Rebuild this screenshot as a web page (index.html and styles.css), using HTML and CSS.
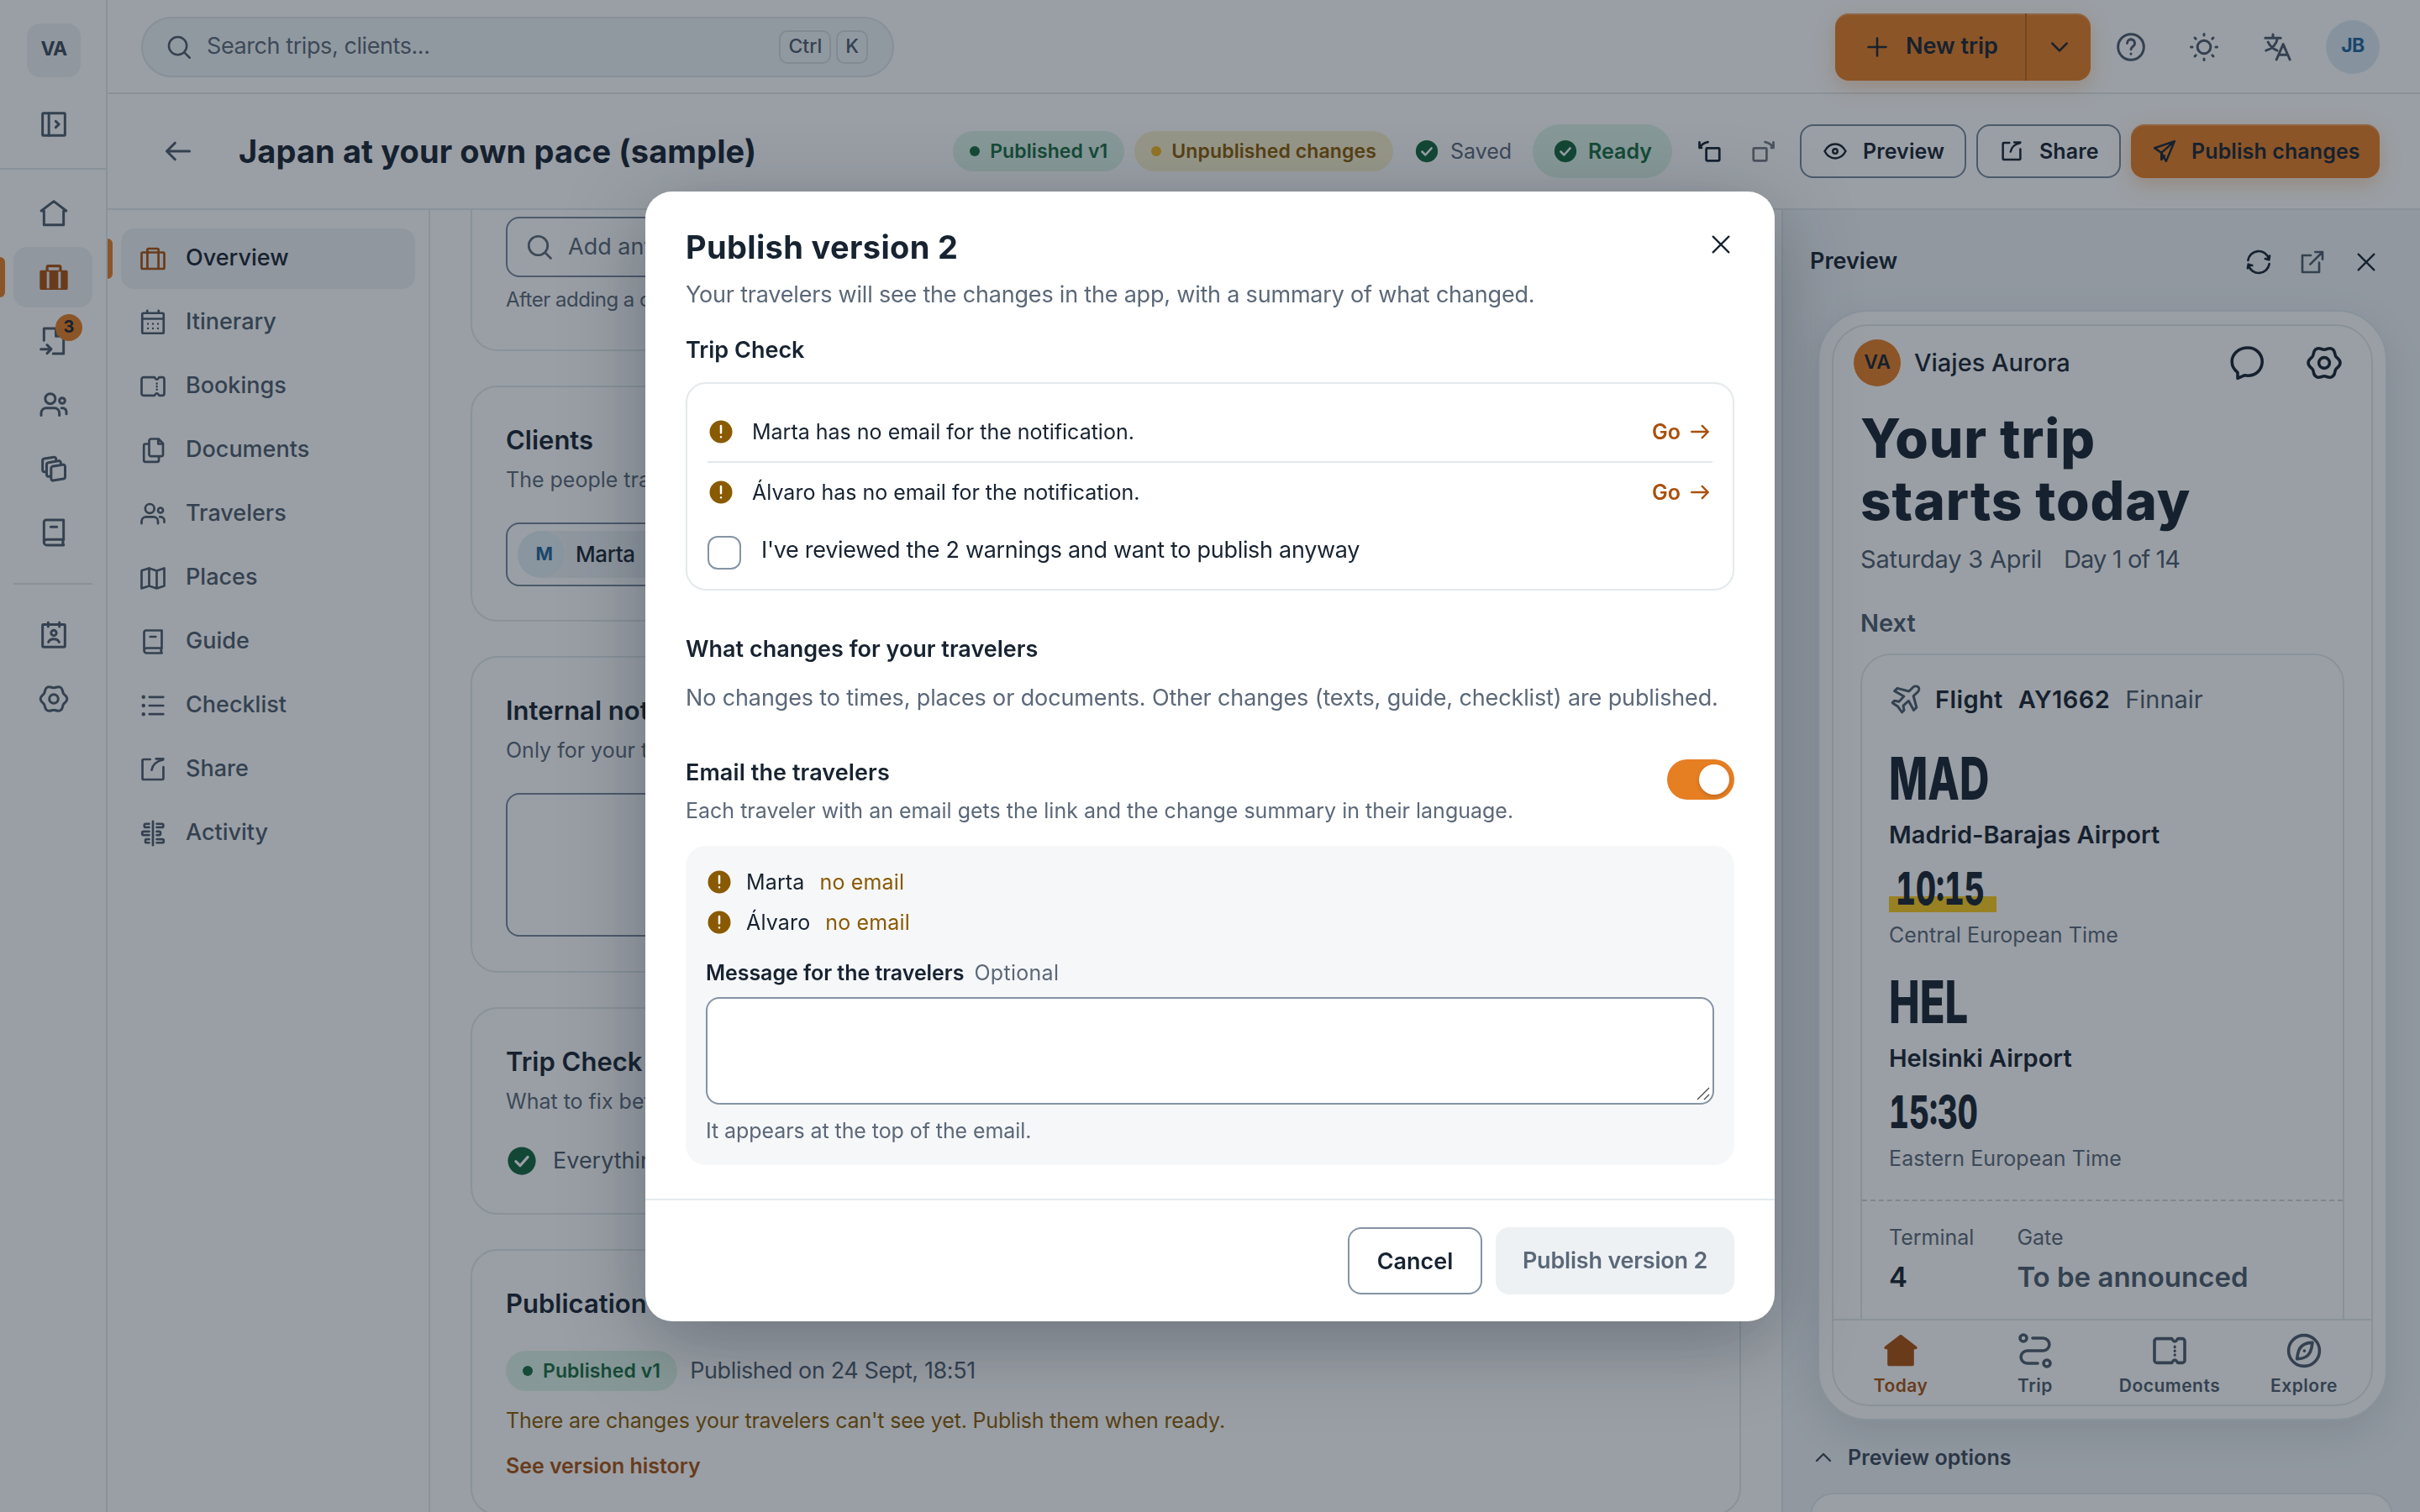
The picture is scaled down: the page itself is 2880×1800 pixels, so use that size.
FILE: index.html
```html
<!DOCTYPE html>
<html lang="en">
<head>
    <meta charset="UTF-8">
    <meta name="viewport" content="width=device-width, initial-scale=1.0">
    <title>Japan at your own pace (sample)</title>
    <link rel="stylesheet" href="styles.css">
</head>
<body>
    <!-- Icon set, 24x24 grid -->
    <svg class="sprite" xmlns="http://www.w3.org/2000/svg">
        <symbol id="i-panel" viewBox="0 0 24 24"><rect x="4" y="4" width="16" height="16" rx=".6"/><path d="M8.500 4v16M13.400 9.800l2.300 2.200-2.300 2.200"/></symbol>
        <symbol id="i-home" viewBox="0 0 24 24"><path d="M5 10.2V20.2h14V10.2h1.9L12 3.4 3.1 10.2z"/></symbol>
        <symbol id="i-home-fill" viewBox="0 0 24 24"><path fill="currentColor" d="M5 10.2V20.2h14V10.2h1.9L12 3.4 3.1 10.2z"/></symbol>
        <symbol id="i-case" viewBox="0 0 24 24"><rect x="3" y="7" width="18" height="13" rx=".8"/><path d="M7.6 20V4.8a.8.8 0 0 1 .8-.8h7.2a.8.8 0 0 1 .8.8V20"/></symbol>
        <symbol id="i-case-fill" viewBox="0 0 24 24"><path fill="currentColor" stroke="none" d="M3 7h3.3V5a2 2 0 0 1 2-2h7.4a2 2 0 0 1 2 2v2H21a1 1 0 0 1 1 1v12a1 1 0 0 1-1 1H3a1 1 0 0 1-1-1V8a1 1 0 0 1 1-1zm5.2 0h7.6V4.9H8.200zM7 8.100v11.800h1.800V8.100zM15.200 8.100v11.800H17V8.100z" fill-rule="evenodd"/></symbol>
        <symbol id="i-import" viewBox="0 0 24 24"><path d="M5 11.500V3h9l5 5v13h-7.500M13.500 3.200V8.500H19M2.800 17.800h7M7.200 14.800l3 3-3 3"/></symbol>
        <symbol id="i-users" viewBox="0 0 24 24"><circle cx="9.500" cy="7.600" r="3.600"/><circle cx="18" cy="9" r="2"/><path d="M3 19.500v-1.700a3.500 3.500 0 0 1 3.500-3.500h6a3.500 3.500 0 0 1 3.500 3.500v1.700M17.500 14.300h.8a2.700 2.700 0 0 1 2.700 2.700v1.500"/></symbol>
        <symbol id="i-stack" viewBox="0 0 24 24"><path d="M10.900 10.400l7.400-1.300a1.500 1.500 0 0 1 1.800 1.300v7.300a1.500 1.500 0 0 1-1.200 1.500l-7.300 1.200a1.300 1.300 0 0 1-1.500-1.300v-7.300a1.400 1.400 0 0 1 .8-1.400z"/><path d="M9.800 17.600H8.100a1.200 1.200 0 0 1-1.200-1.200V9a1.400 1.400 0 0 1 1.200-1.400l7.100-1.200a1.500 1.500 0 0 1 1.800 1.300v1.400M6.800 14.300H5.200A1.200 1.200 0 0 1 4 13.100V6.300a1.500 1.500 0 0 1 1.200-1.500l6.800-1.100a1.400 1.400 0 0 1 1.600 1.300v1.500"/></symbol>
        <symbol id="i-book" viewBox="0 0 24 24"><path d="M5 19V4.500A1.500 1.500 0 0 1 6.500 3H19v14H6.800M19 17l-.6 2 .6 2H7a2 2 0 0 1-2-2 2 2 0 0 1 2-2M9.800 8h4.400"/></symbol>
        <symbol id="i-contact" viewBox="0 0 24 24"><rect x="4" y="4.500" width="16" height="16" rx=".5"/><path d="M8 3v3M16 3v3M8.200 17c.6-1.300 2-2.100 3.800-2.100s3.200.8 3.800 2.100"/><circle cx="12" cy="10.500" r="1.900"/></symbol>
        <symbol id="i-gear" viewBox="0 0 24 24"><g transform="translate(12 12)"><path d="M9.500 0C9.500 2.200 7.590 2.650 6.840 3.950 6.090 5.250 6.660 7.130 4.750 8.230 2.840 9.330 1.500 7.900 0 7.900-1.500 7.900-2.840 9.330-4.750 8.230-6.660 7.130-6.090 5.250-6.840 3.950-7.590 2.650-9.500 2.200-9.500 0-9.500-2.200-7.590-2.650-6.840-3.950-6.090-5.250-6.660-7.130-4.750-8.230-2.840-9.330-1.500-7.900 0-7.900 1.500-7.900 2.840-9.330 4.750-8.230 6.660-7.130 6.090-5.250 6.840-3.950 7.590-2.650 9.500-2.200 9.500 0z"/><circle r="3.200"/></g></symbol>
        <symbol id="i-calendar" viewBox="0 0 24 24"><rect x="3.500" y="4.500" width="17" height="16" rx="1"/><path d="M7.500 2.500v2M16.500 2.500v2M3.500 9h17"/><path class="dots" d="M8 13h.01M12 13h.01M16 13h.01M8 16.700h.01M12 16.700h.01M16 16.700h.01"/></symbol>
        <symbol id="i-ticket" viewBox="0 0 24 24"><path d="M4.500 4.800h8.700c.6 0 .6 1.700 1.900 1.700s1.300-1.700 2-1.700h2.400A1.500 1.500 0 0 1 21 6.300v11.400a1.500 1.500 0 0 1-1.500 1.500h-2.400c-.7 0-.7-1.700-2-1.700s-1.300 1.700-1.900 1.700H4.500A1.500 1.500 0 0 1 3 17.700V6.300a1.500 1.500 0 0 1 1.500-1.500z"/><path class="dots" d="M15.100 9.600v.3M15.100 12v.2M15.100 14.400v.2"/></symbol>
        <symbol id="i-docs" viewBox="0 0 24 24"><path d="M16.500 3h-6A1.500 1.500 0 0 0 9 4.500v10.800a1.500 1.500 0 0 0 1.500 1.500h8a1.500 1.500 0 0 0 1.500-1.500V6.700zM16.200 3v4h3.800M9 7H6a1.200 1.200 0 0 0-1.200 1.200V20A1.200 1.200 0 0 0 6 21.200h9.500a1.200 1.200 0 0 0 1.200-1.200v-3.200"/></symbol>
        <symbol id="i-map" viewBox="0 0 24 24"><path d="M3 6.200l6-1.900 6 2 6-2v14l-6 2-6-2-6 2zM9 4.300v14M15 6.300v14"/></symbol>
        <symbol id="i-list" viewBox="0 0 24 24"><path d="M9.200 5.200h11M9.200 12h11M9.200 18.800h11"/><path class="dots dots-lg" d="M4.500 5.200h.01M4.500 12h.01M4.500 18.800h.01"/></symbol>
        <symbol id="i-share" viewBox="0 0 24 24"><path d="M9.800 4H4.500a.8.800 0 0 0-.8.800v14.400a.8.800 0 0 0 .8.800h15a.8.800 0 0 0 .8-.8V10M11 12.500c.6-4 3.500-7 9-8.200M14.500 3.600h5.800"/></symbol>
        <symbol id="i-sign" viewBox="0 0 24 24"><path d="M12 2.500v19M9 4.500H6.200a1 1 0 0 0-1 1v.8a1 1 0 0 0 1 1H9M15 4.500h4.200a1 1 0 0 1 1 1v.8a1 1 0 0 1-1 1H15M9 10.600H4.500a1 1 0 0 0-1 1v.8a1 1 0 0 0 1 1H9M15 10.600h2a1 1 0 0 1 1 1v.8a1 1 0 0 1-1 1h-2M9 16.700H7a1 1 0 0 0-1 1v.8a1 1 0 0 0 1 1h2M15 16.700h4.500a1 1 0 0 1 1 1v.8a1 1 0 0 1-1 1H15"/></symbol>
        <symbol id="i-search" viewBox="0 0 24 24"><circle cx="11" cy="11" r="7.500"/><path d="M17 17l4 4"/></symbol>
        <symbol id="i-back" viewBox="0 0 24 24"><path d="M21 12H3.500M9.500 5.500L3 12l6.500 6.500"/></symbol>
        <symbol id="i-arrow" viewBox="0 0 24 24"><path d="M3 12h17.500M14.500 5.500L21 12l-6.500 6.500"/></symbol>
        <symbol id="i-plus" viewBox="0 0 24 24"><path d="M12 3v18M3 12h18"/></symbol>
        <symbol id="i-down" viewBox="0 0 24 24"><path d="M4 8l8 8 8-8"/></symbol>
        <symbol id="i-up" viewBox="0 0 24 24"><path d="M4 16l8-8 8 8"/></symbol>
        <symbol id="i-close" viewBox="0 0 24 24"><path d="M4 4l16 16M20 4L4 20"/></symbol>
        <symbol id="i-help" viewBox="0 0 24 24"><circle cx="12" cy="12" r="9.200"/><path d="M9.300 9.300a2.700 2.700 0 1 1 4.200 2.200c-.9.600-1.500 1.100-1.500 2.100M12 16.800v.1"/></symbol>
        <symbol id="i-sun" viewBox="0 0 24 24"><circle cx="12" cy="12" r="4.700"/><path d="M12 2.700v.9M12 20.400v.9M2.700 12h.9M20.400 12h.9M5.400 5.400l.7.700M17.900 17.900l.7.700M18.600 5.400l-.7.700M6.100 17.900l-.7.700"/></symbol>
        <symbol id="i-lang" viewBox="0 0 24 24"><path d="M3.500 5.500h11M9 3v2.500M12.300 5.500c-.7 4-3.500 7.500-8.300 9M5.500 8.500c1.300 2.700 3.500 4.900 6.500 6M11.500 21l4.800-11 4.800 11M13.200 17.500h6.200"/></symbol>
        <symbol id="i-check" viewBox="0 0 24 24"><circle cx="12" cy="12" r="10.500" fill="currentColor" stroke="none"/><path class="mark" d="M7.500 12.400l3.200 3.200 5.800-6.500"/></symbol>
        <symbol id="i-warn" viewBox="0 0 24 24"><circle cx="12" cy="12" r="10.800" fill="currentColor" stroke="none"/><path class="mark" d="M12 6.300v6.700M12 16.900v.1"/></symbol>
        <symbol id="i-undo" viewBox="0 0 24 24"><path d="M2.200 8.500C4 5.500 6.500 4 10 3.300M2 3.500v5.200h2"/><rect x="8.500" y="9" width="12.500" height="12" rx=".8"/></symbol>
        <symbol id="i-redo" viewBox="0 0 24 24"><path d="M21.800 8.500C20 5.500 17.500 4 14 3.300M22 3.500v5.200h-2"/><rect x="3" y="9" width="12.500" height="12" rx=".8"/></symbol>
        <symbol id="i-eye" viewBox="0 0 24 24"><path d="M2 12c2.300-4.300 5.700-6.800 10-6.800S19.700 7.700 22 12c-2.300 4.300-5.700 6.800-10 6.800S4.300 16.300 2 12z"/><circle cx="12" cy="12" r="2.200"/></symbol>
        <symbol id="i-send" viewBox="0 0 24 24"><path d="M21.500 2.500L2.500 9l6.500 4.500L13.500 21.500zM21.500 2.500L9 13.500v6.500l3-3.500"/></symbol>
        <symbol id="i-refresh" viewBox="0 0 24 24"><path d="M2.500 10.500a9.500 9.500 0 0 1 18.500-1.500M21.500 13.500A9.500 9.500 0 0 1 3 15M21.800 6.500L21.200 10l-3.400-1M2.200 17.500L2.800 14l3.400 1"/></symbol>
        <symbol id="i-external" viewBox="0 0 24 24"><path d="M10.500 6H3v15h15v-8.500M10 14L21 3M14.500 3H21v6.500"/></symbol>
        <symbol id="i-chat" viewBox="0 0 24 24"><path d="M12.500 3c-5 0-9.400 3.400-9.400 8.300 0 2.800 1.500 5 3.400 6.400v3.500l4-1.800c.6.100 1.300.2 2 .2 5 0 8.600-3.700 8.600-8.300S17.500 3 12.500 3z"/></symbol>
        <symbol id="i-plane" viewBox="0 0 24 24"><path d="M21 3c-1.200-1-3-.7-4 .3L14.300 6 6 3.800 4 5.800l6.700 3.800-3.500 3.700-3.200-.6-1.500 1.500 4 2.800L9.300 21l1.500-1.500-.6-3.200 3.800-3.500L17.700 19.500l2-2L17.500 9.300 20.500 6.500c1-.9 1.400-2.500.5-3.500z"/></symbol>
        <symbol id="i-route" viewBox="0 0 24 24"><circle cx="5" cy="4.500" r="2"/><circle cx="19" cy="19.500" r="2"/><path d="M10.500 4.500h6.200a3.700 3.700 0 0 1 0 7.500H7.300a3.700 3.700 0 0 0 0 7.500h6.200"/></symbol>
        <symbol id="i-compass" viewBox="0 0 24 24"><circle cx="12" cy="12" r="9.200"/><path d="M17 7.200c-3.500-.2-6.800 1.400-8 4.300-.6 1.500-1 3.300-1.200 5.300 3.500.2 6.600-1.300 7.900-4.200.7-1.500 1.100-3.400 1.300-5.400z"/><path d="M12.200 12v.1"/></symbol>
    </svg>

    <div class="app">
        <nav class="rail">
            <div class="rail-logo">VA</div>
            <div class="rail-toggle"><svg class="icon"><use href="#i-panel"/></svg></div>
            <div class="rail-items">
                <a class="rail-item"><svg class="icon"><use href="#i-home"/></svg></a>
                <a class="rail-item active"><svg class="icon"><use href="#i-case-fill"/></svg></a>
                <a class="rail-item"><svg class="icon"><use href="#i-import"/></svg><span class="badge">3</span></a>
                <a class="rail-item"><svg class="icon"><use href="#i-users"/></svg></a>
                <a class="rail-item"><svg class="icon"><use href="#i-stack"/></svg></a>
                <a class="rail-item"><svg class="icon"><use href="#i-book"/></svg></a>
                <div class="rail-divider"></div>
                <a class="rail-item"><svg class="icon"><use href="#i-contact"/></svg></a>
                <a class="rail-item"><svg class="icon"><use href="#i-gear"/></svg></a>
            </div>
        </nav>

        <div class="page">
            <div class="topbar">
                <div class="search">
                    <svg class="icon"><use href="#i-search"/></svg>
                    <span class="search-text">Search trips, clients...</span>
                    <kbd>Ctrl</kbd><kbd>K</kbd>
                </div>
                <div class="new-trip">
                    <div class="new-trip-main"><svg class="icon"><use href="#i-plus"/></svg><span>New trip</span></div>
                    <div class="new-trip-more"><svg class="icon"><use href="#i-down"/></svg></div>
                </div>
                <div class="top-icons">
                    <svg class="icon"><use href="#i-help"/></svg>
                    <svg class="icon"><use href="#i-sun"/></svg>
                    <svg class="icon"><use href="#i-lang"/></svg>
                </div>
                <div class="user">JB</div>
            </div>

            <div class="trip-header">
                <svg class="icon back"><use href="#i-back"/></svg>
                <h1>Japan at your own pace (sample)</h1>
                <span class="pill green"><i></i><span>Published v1</span></span>
                <span class="pill yellow"><i></i><span>Unpublished changes</span></span>
                <span class="saved"><svg class="icon ok"><use href="#i-check"/></svg><span>Saved</span></span>
                <span class="ready"><svg class="icon ok"><use href="#i-check"/></svg><span>Ready</span></span>
                <svg class="icon undo"><use href="#i-undo"/></svg>
                <svg class="icon redo"><use href="#i-redo"/></svg>
                <a class="btn btn-preview"><svg class="icon"><use href="#i-eye"/></svg><span>Preview</span></a>
                <a class="btn btn-share"><svg class="icon"><use href="#i-share"/></svg><span>Share</span></a>
                <a class="btn btn-publish"><svg class="icon"><use href="#i-send"/></svg><span>Publish changes</span></a>
            </div>

            <div class="body">
                <nav class="side">
                    <a class="side-item active"><svg class="icon"><use href="#i-case"/></svg><span>Overview</span></a>
                    <a class="side-item"><svg class="icon"><use href="#i-calendar"/></svg><span>Itinerary</span></a>
                    <a class="side-item"><svg class="icon"><use href="#i-ticket"/></svg><span>Bookings</span></a>
                    <a class="side-item"><svg class="icon"><use href="#i-docs"/></svg><span>Documents</span></a>
                    <a class="side-item"><svg class="icon"><use href="#i-users"/></svg><span>Travelers</span></a>
                    <a class="side-item"><svg class="icon"><use href="#i-map"/></svg><span>Places</span></a>
                    <a class="side-item"><svg class="icon"><use href="#i-book"/></svg><span>Guide</span></a>
                    <a class="side-item"><svg class="icon"><use href="#i-list"/></svg><span>Checklist</span></a>
                    <a class="side-item"><svg class="icon"><use href="#i-share"/></svg><span>Share</span></a>
                    <a class="side-item"><svg class="icon"><use href="#i-sign"/></svg><span>Activity</span></a>
                </nav>

                <main class="main">
                    <section class="card card-tags">
                        <div class="field"><svg class="icon"><use href="#i-search"/></svg><span>Add any</span></div>
                        <p class="hint">After adding a city</p>
                    </section>
                    <section class="card card-clients">
                        <h2>Clients</h2>
                        <p class="sub">The people traveling</p>
                        <div class="chips"><div class="chip"><b>M</b><span>Marta</span></div></div>
                    </section>
                    <section class="card card-notes">
                        <h2>Internal notes</h2>
                        <p class="sub">Only for your team</p>
                        <div class="notes"></div>
                    </section>
                    <section class="card card-check">
                        <h2>Trip Check</h2>
                        <p class="sub">What to fix before</p>
                        <div class="check-line"><svg class="icon ok"><use href="#i-check"/></svg><span>Everything</span></div>
                    </section>
                    <section class="card card-pub">
                        <h2>Publication</h2>
                        <div class="pub-line"><span class="pill green"><i></i><span>Published v1</span></span><span class="pub-date">Published on 24 Sept, 18:51</span></div>
                        <p class="pub-warn">There are changes your travelers can't see yet. Publish them when ready.</p>
                        <p class="pub-link">See version history</p>
                    </section>
                </main>

                <aside class="preview">
                    <div class="preview-head">
                        <span>Preview</span>
                        <svg class="icon"><use href="#i-refresh"/></svg>
                        <svg class="icon soft"><use href="#i-external"/></svg>
                        <svg class="icon"><use href="#i-close"/></svg>
                    </div>
                    <div class="phone">
                        <div class="screen">
                            <div class="screen-body">
                                <div class="brand">
                                    <div class="brand-logo">VA</div>
                                    <span class="brand-name">Viajes Aurora</span>
                                    <svg class="icon"><use href="#i-chat"/></svg>
                                    <svg class="icon"><use href="#i-gear"/></svg>
                                </div>
                                <div class="today">Your trip<br>starts today</div>
                                <div class="date"><span>Saturday 3 April</span><span class="day">Day 1 of 14</span></div>
                                <div class="next">Next</div>
                                <div class="flight">
                                    <div class="flight-head">
                                        <svg class="icon"><use href="#i-plane"/></svg>
                                        <b>Flight</b><b>AY1662</b><span>Finnair</span>
                                    </div>
                                    <div class="code"><span>MAD</span></div>
                                    <div class="airport">Madrid-Barajas Airport</div>
                                    <div class="time marked"><span>10:15</span></div>
                                    <div class="zone">Central European Time</div>
                                    <div class="code second"><span>HEL</span></div>
                                    <div class="airport">Helsinki Airport</div>
                                    <div class="time"><span>15:30</span></div>
                                    <div class="zone">Eastern European Time</div>
                                    <div class="gate">
                                        <div><label>Terminal</label><strong>4</strong></div>
                                        <div><label>Gate</label><strong class="tba">To be announced</strong></div>
                                    </div>
                                </div>
                            </div>
                            <div class="tabs">
                                <div class="tab active"><svg class="icon"><use href="#i-home-fill"/></svg><span>Today</span></div>
                                <div class="tab"><svg class="icon"><use href="#i-route"/></svg><span>Trip</span></div>
                                <div class="tab"><svg class="icon"><use href="#i-ticket"/></svg><span>Documents</span></div>
                                <div class="tab"><svg class="icon"><use href="#i-compass"/></svg><span>Explore</span></div>
                            </div>
                        </div>
                    </div>
                    <div class="options"><svg class="icon"><use href="#i-up"/></svg><span>Preview options</span></div>
                    <div class="options-card"></div>
                </aside>
            </div>
        </div>
    </div>

    <div class="overlay">
        <div class="modal">
            <div class="modal-body">
                <div class="modal-head">
                    <h2>Publish version 2</h2>
                    <svg class="icon"><use href="#i-close"/></svg>
                </div>
                <p class="lead">Your travelers will see the changes in the app, with a summary of what changed.</p>
                <h3 class="h-check">Trip Check</h3>
                <div class="check-box">
                    <div class="check-row"><svg class="icon warn"><use href="#i-warn"/></svg><span>Marta has no email for the notification.</span><a>Go</a><svg class="icon go"><use href="#i-arrow"/></svg></div>
                    <div class="check-row"><svg class="icon warn"><use href="#i-warn"/></svg><span>Álvaro has no email for the notification.</span><a>Go</a><svg class="icon go"><use href="#i-arrow"/></svg></div>
                    <div class="confirm"><i class="box"></i><span>I've reviewed the 2 warnings and want to publish anyway</span></div>
                </div>
                <h3 class="h-changes">What changes for your travelers</h3>
                <p class="changes">No changes to times, places or documents. Other changes (texts, guide, checklist) are published.</p>
                <div class="email-row">
                    <div>
                        <h3>Email the travelers</h3>
                        <p>Each traveler with an email gets the link and the change summary in their language.</p>
                    </div>
                    <div class="toggle"><i></i></div>
                </div>
                <div class="mail-box">
                    <div class="mail-row"><svg class="icon warn"><use href="#i-warn"/></svg><span>Marta</span><em>no email</em></div>
                    <div class="mail-row"><svg class="icon warn"><use href="#i-warn"/></svg><span>Álvaro</span><em>no email</em></div>
                    <div class="mail-label"><b>Message for the travelers</b><span>Optional</span></div>
                    <div class="message">
                        <svg class="grip" viewBox="0 0 16 16"><path d="M1 15L15 1M9 15l6-6"/></svg>
                    </div>
                    <p class="mail-hint">It appears at the top of the email.</p>
                </div>
            </div>
            <div class="modal-foot">
                <a class="cancel">Cancel</a>
                <a class="confirm-btn">Publish version 2</a>
            </div>
        </div>
    </div>
</body>
</html>
```
FILE: styles.css
```css
* {
    box-sizing: border-box;
}
body {
    margin: 0;
    font-family: Inter, "Liberation Sans", sans-serif;
    font-size: 27px;
    line-height: 40px;
    color: #172331;
    background-color: #fff;
    overflow: hidden;
}
h1, h2, h3, p {
    margin: 0;
    font-weight: inherit;
}
.sprite {
    display: none;
}
.icon {
    width: 40px;
    height: 40px;
    flex: none;
    display: block;
    fill: none;
    stroke: currentColor;
    stroke-width: 1.8;
    stroke-linecap: round;
    stroke-linejoin: round;
}
.dots {
    stroke-width: 1.6;
}
.dots-lg {
    stroke-width: 3;
}
.mark {
    stroke: #fff;
    stroke-width: 2;
}
.app {
    display: flex;
    width: 2880px;
    height: 1800px;
    overflow: hidden;
}

/* left rail */
.rail {
    width: 128px;
    flex: none;
    border-right: 2px solid #e1e8eb;
    padding-top: 28px;
    color: #4d5b6b;
}
.rail-logo {
    width: 64px;
    height: 64px;
    margin: 0 auto 20px 32px;
    border-radius: 16px;
    background-color: #edf1f4;
    color: #3b4858;
    font-size: 23px;
    font-weight: 700;
    letter-spacing: -.8px;
    line-height: 60px;
    text-align: center;
}
.rail-toggle {
    height: 88px;
    padding: 16px 0 0 44px;
}
.rail-items {
    border-top: 2px solid #e1e8eb;
    padding: 16px 16px 0;
    display: flex;
    flex-direction: column;
    gap: 4px;
}
.rail-item {
    position: relative;
    height: 72px;
    width: 94px;
    padding: 16px 0 0 28px;
    border-radius: 16px;
}
.rail-item.active, .side-item.active {
    background-color: #edf1f4;
}
.rail-item.active {
    color: #a9500d;
}
.rail-item.active::before, .side-item.active::before {
    content: "";
    position: absolute;
    left: -16px;
    top: 12px;
    width: 6px;
    height: 48px;
    border-radius: 0 6px 6px 0;
    background-color: #e67e22;
}
.badge {
    position: absolute;
    left: 50px;
    top: 4px;
    width: 32px;
    height: 32px;
    border-radius: 50%;
    background-color: #e67e22;
    color: #172331;
    font-size: 20px;
    font-weight: 700;
    line-height: 31px;
    text-align: center;
}
.rail-divider {
    height: 2px;
    margin: 20px 0;
    background-color: #e1e8eb;
}

/* top bar */
.page {
    width: 2752px;
    display: flex;
    flex-direction: column;
}
.topbar {
    height: 112px;
    flex: none;
    border-bottom: 2px solid #e1e8eb;
    padding: 2px 48px 0 40px;
    display: flex;
    align-items: center;
}
.search {
    width: 896px;
    height: 72px;
    border: 2px solid #dde4e8;
    border-radius: 36px;
    background-color: #f0f4f6;
    color: #5b6878;
    padding: 0 29px 0 26px;
    display: flex;
    align-items: center;
}
.search .icon {
    width: 34px;
    height: 34px;
    color: #4d5b6b;
    margin-right: 16px;
}
.search-text {
    flex: 1;
    padding-bottom: 2px;
    letter-spacing: -.42px;
}
kbd {
    font: 500 23px/34px Inter, sans-serif;
    height: 40px;
    border: 2px solid #d3dbe0;
    border-radius: 10px;
    padding: 0 9px;
    margin-left: 6px;
    color: #4d5b6b;
}
.new-trip {
    margin-left: auto;
    width: 304px;
    height: 80px;
    border-radius: 16px;
    display: flex;
    background-color: #e67e22;
    box-shadow: inset 0 2px 0 rgba(255, 255, 255, .2), 0 8px 24px rgba(230, 126, 34, .3);
    font-weight: 600;
}
.new-trip-main {
    width: 228px;
    border-right: 2px solid #b8651b;
    padding-left: 36px;
    display: flex;
    align-items: center;
    gap: 20px;
}
.new-trip-main .icon {
    width: 28px;
    height: 28px;
    stroke-width: 2.2;
}
.new-trip-main span {
    padding-bottom: 2px;
}
.new-trip-more {
    padding: 27px 0 0 26px;
}
.new-trip-more .icon {
    width: 26px;
    height: 26px;
    stroke-width: 2.4;
}
.top-icons {
    display: flex;
    gap: 47px;
    margin-left: 28px;
    color: #4d5b6b;
}
.user {
    margin-left: 38px;
    width: 64px;
    height: 64px;
    border-radius: 50%;
    background-color: #dceaf3;
    color: #1f639b;
    font-size: 23px;
    font-weight: 700;
    letter-spacing: -.6px;
    line-height: 60px;
    text-align: center;
}

/* trip header */
.trip-header {
    height: 138px;
    flex: none;
    border-bottom: 2px solid #e1e8eb;
    padding: 0 48px 0 66px;
    display: flex;
    align-items: center;
    font-size: 25px;
}
.back {
    width: 36px;
    height: 36px;
    color: #4d5b6b;
    stroke-width: 2.1;
}
h1 {
    flex: 1;
    margin-left: 54px;
    font-size: 38px;
    font-weight: 700;
    letter-spacing: .1px;
    white-space: nowrap;
}
.pill {
    height: 48px;
    border-radius: 24px;
    padding: 0 20px;
    display: flex;
    align-items: center;
    gap: 12px;
    font-size: 23px;
    font-weight: 600;
    letter-spacing: .1px;
    white-space: nowrap;
}
.pill i {
    width: 12px;
    height: 12px;
    border-radius: 50%;
    background-color: currentColor;
}
.green {
    background-color: #dcf3e6;
    color: #176b3f;
}
.yellow {
    margin-left: 12px;
    background-color: #f8f0cc;
    color: #8a5a00;
}
.yellow i {
    background-color: #f0b41c;
}
.ok {
    width: 30px;
    height: 30px;
    color: #12653a;
}
.saved {
    display: flex;
    align-items: center;
    gap: 13px;
    margin-left: 25px;
    color: #5b6878;
}
.ready {
    display: flex;
    align-items: center;
    gap: 12px;
    height: 64px;
    border-radius: 32px;
    margin-left: 25px;
    padding: 0 24px;
    background-color: #dcf3e6;
    color: #176b3f;
    font-weight: 600;
}
.undo, .redo {
    width: 30px;
    height: 30px;
    margin-left: 30px;
    stroke-width: 2.2;
}
.redo {
    margin-left: 33px;
    opacity: .6;
}
.btn {
    height: 64px;
    border: 2px solid #76869a;
    border-radius: 16px;
    display: flex;
    align-items: center;
    font-weight: 600;
    letter-spacing: .1px;
    white-space: nowrap;
}
.btn .icon {
    width: 30px;
    height: 30px;
    stroke-width: 2;
}
.btn-preview {
    width: 198px;
    margin-left: 29px;
    padding-left: 25px;
    gap: 18px;
}
.btn-share {
    width: 172px;
    margin-left: 12px;
    padding-left: 25px;
    gap: 18px;
}
.btn-publish {
    width: 296px;
    margin-left: 12px;
    padding-left: 25px;
    gap: 17px;
    border: 0;
    background-color: #e67e22;
    box-shadow: inset 0 2px 0 rgba(255, 255, 255, .2), 0 8px 24px rgba(230, 126, 34, .3);
}

/* trip menu */
.body {
    height: 1550px;
    display: flex;
}
.side {
    width: 384px;
    flex: none;
    border-right: 2px solid #e1e8eb;
    padding: 22px 16px;
    display: flex;
    flex-direction: column;
    gap: 4px;
}
.side-item {
    position: relative;
    height: 72px;
    border-radius: 16px;
    padding-left: 20px;
    display: flex;
    align-items: center;
    gap: 21px;
    font-weight: 500;
    color: #4d5b6b;
}
.side-item .icon {
    width: 36px;
    height: 36px;
}
.side-item span {
    padding-bottom: 3px;
}
.side-item.active {
    color: #172331;
}
.side-item.active .icon {
    color: #a9500d;
}

/* main column */
.main {
    width: 1608px;
    flex: none;
    padding: 0 48px;
    display: flex;
    flex-direction: column;
    gap: 41px;
    white-space: nowrap;
}
.card {
    flex: none;
    border: 2px solid #e1e8eb;
    border-radius: 32px;
    padding: 41px 40px 0;
    overflow: hidden;
}
.card h2 {
    font-size: 31px;
    line-height: 44px;
    font-weight: 600;
}
.sub {
    margin-top: 7px;
    font-size: 25px;
    line-height: 36px;
    color: #5b6878;
}
.card-tags {
    height: 168px;
    border-top: 0;
    border-radius: 0 0 32px 32px;
    padding-top: 8px;
}
.field {
    height: 72px;
    border: 2px solid #76869a;
    border-radius: 16px;
    padding-left: 20px;
    display: flex;
    align-items: center;
    gap: 16px;
    color: #5b6878;
}
.field .icon {
    width: 36px;
    height: 36px;
}
.hint {
    margin-top: 9px;
    font-size: 24px;
    line-height: 36px;
    letter-spacing: -.5px;
    color: #5b6878;
}
.card-clients {
    height: 281px;
}
.chips {
    margin-top: 33px;
    height: 76px;
    border: 2px solid #76869a;
    border-radius: 16px;
    padding: 8px 12px;
}
.chip {
    display: inline-flex;
    align-items: center;
    height: 56px;
    border-radius: 28px;
    background-color: #edf1f4;
    padding-right: 60px;
    font-size: 26px;
    font-weight: 500;
    letter-spacing: -.4px;
}
.chip b {
    width: 56px;
    height: 56px;
    margin-right: 13px;
    border-radius: 50%;
    background-color: #e2edf4;
    color: #1f639b;
    font-size: 22px;
    line-height: 54px;
    padding-left: 7px;
    text-align: center;
}
.card-notes {
    height: 377px;
}
.notes {
    margin-top: 33px;
    height: 171px;
    border: 2px solid #76869a;
    border-radius: 16px;
}
.card-check {
    height: 247px;
}
.check-line {
    display: flex;
    align-items: center;
    gap: 18px;
    margin-top: 33px;
    color: #4d5b6b;
}
.check-line .icon {
    width: 38px;
    height: 38px;
}
.card-pub {
    height: 317px;
}
.pub-line {
    display: flex;
    align-items: center;
    gap: 15px;
    margin-top: 34px;
    color: #4d5b6b;
}
.pub-date {
    letter-spacing: -.4px;
}
.pub-warn {
    margin-top: 17px;
    font-size: 25px;
    line-height: 36px;
    letter-spacing: -.18px;
    color: #8a5a00;
}
.pub-link {
    margin-top: 16px;
    font-size: 25px;
    font-weight: 600;
    letter-spacing: -.05px;
    color: #a9500d;
}

/* preview panel */
.preview {
    width: 760px;
    flex: none;
    border-left: 2px solid #e1e8eb;
    background-color: #eff3f6;
    padding: 0 32px;
    white-space: nowrap;
}
.preview-head {
    display: flex;
    align-items: center;
    height: 119px;
    padding-top: 5px;
    font-weight: 600;
}
.preview-head span {
    flex: 1;
    padding-bottom: 2px;
}
.preview-head .icon {
    width: 32px;
    height: 32px;
    margin-left: 32px;
    stroke-width: 2;
}
.preview-head .icon:last-child {
    width: 28px;
    height: 28px;
    margin: 0 18px 0 34px;
}
.soft {
    color: #4d5b6b;
}
.phone {
    width: 678px;
    height: 1322px;
    margin-left: 9px;
    border: 2px solid #e1e8eb;
    border-radius: 60px;
    background-color: #fff;
    padding: 15px;
    box-shadow: 0 16px 48px rgba(20, 32, 46, .12);
}
.screen {
    height: 1288px;
    border: 2px solid #e1e8eb;
    border-radius: 44px;
    overflow: hidden;
    display: flex;
    flex-direction: column;
}
.screen-body {
    height: 1182px;
    flex: none;
    overflow: hidden;
    padding: 16px 32px 0;
}
.brand {
    height: 56px;
    margin-left: -8px;
    display: flex;
    align-items: center;
}
.brand-logo {
    width: 56px;
    height: 56px;
    border-radius: 50%;
    background-color: #e67e22;
    font-size: 23px;
    font-weight: 600;
    line-height: 54px;
    text-align: center;
}
.brand-name {
    flex: 1;
    margin-left: 16px;
    font-size: 29px;
    font-weight: 500;
}
.brand .icon {
    width: 48px;
    height: 48px;
    margin-left: 44px;
}
.today {
    margin-top: 25px;
    font-size: 64px;
    font-weight: 800;
    line-height: 74px;
    letter-spacing: .9px;
}
.date {
    display: flex;
    gap: 26px;
    margin-top: 13px;
    font-size: 29px;
    letter-spacing: -.2px;
    color: #4d5b6b;
}
.day {
    letter-spacing: -.9px;
}
.next {
    margin-top: 36px;
    font-size: 29px;
    font-weight: 600;
    color: #4d5b6b;
}
.flight {
    margin-top: 16px;
    height: 900px;
    border: 2px solid #e1e8eb;
    border-radius: 36px;
    padding: 33px 32px 0;
}
.flight-head {
    display: flex;
    align-items: center;
    font-size: 29px;
    color: #4d5b6b;
}
.flight-head .icon {
    width: 40px;
    height: 40px;
    margin-right: 15px;
}
.flight-head b {
    font-weight: 600;
    color: #172331;
    letter-spacing: .4px;
    margin-right: 18px;
}
.code {
    margin-top: 38px;
    font-size: 70px;
    line-height: 72px;
    font-weight: 800;
}
.code.second {
    margin-top: 26px;
}
.code span, .time span {
    display: inline-block;
    transform: scaleX(.7);
    transform-origin: left;
}
.airport {
    margin-top: 11px;
    font-size: 29px;
    font-weight: 600;
}
.time {
    margin-top: 17px;
    width: 128px;
    font-size: 53px;
    line-height: 55px;
    font-weight: 800;
    font-variant-numeric: tabular-nums;
}
.marked {
    padding-left: 8px;
    background: linear-gradient(#fccb1b, #fccb1b) bottom / 100% 19px no-repeat;
}
.zone {
    margin-top: 9px;
    font-size: 25px;
    line-height: 36px;
    letter-spacing: .1px;
    color: #5b6878;
}
.gate {
    display: flex;
    gap: 51px;
    margin: 31px -32px 0;
    padding: 25px 32px 0;
    border-top: 2px dashed #ccd4da;
}
.gate label {
    display: block;
    font-size: 25px;
    line-height: 36px;
    color: #5b6878;
}
.gate strong {
    display: block;
    margin-top: 7px;
    font-size: 33px;
    line-height: 44px;
    font-weight: 600;
}
.gate .tba {
    color: #4d5b6b;
}
.tabs {
    flex: 1;
    border-top: 2px solid #e1e8eb;
    display: grid;
    grid-template-columns: repeat(4, 1fr);
    color: #4d5b6b;
    font-size: 21px;
    font-weight: 600;
    line-height: 30px;
    letter-spacing: .5px;
    text-align: center;
}
.tab .icon {
    width: 48px;
    height: 48px;
    margin: 12px auto 3px;
}
.tab.active {
    color: #a9500d;
}
.options {
    display: flex;
    align-items: center;
    gap: 17px;
    margin: 24px 0 22px 4px;
    font-size: 25px;
    font-weight: 600;
    letter-spacing: .1px;
    color: #3b4858;
}
.options .icon {
    width: 24px;
    height: 24px;
    stroke-width: 2.4;
}
.options-card {
    width: 694px;
    height: 80px;
    border: 2px solid #e1e8eb;
    border-radius: 28px;
    background-color: #fff;
}

/* publish dialog */
.overlay {
    position: fixed;
    inset: 0;
    display: flex;
    align-items: center;
    justify-content: center;
    background-color: rgba(20, 32, 46, .43);
    white-space: nowrap;
}
.modal {
    width: 1344px;
    border-radius: 32px;
    background-color: #fff;
    box-shadow: 0 24px 96px rgba(20, 32, 46, .35);
}
.modal-body {
    padding: 42px 48px 40px;
}
.modal-head {
    display: flex;
    justify-content: space-between;
    height: 48px;
}
.modal-head h2 {
    font-size: 38px;
    font-weight: 700;
    line-height: 48px;
    letter-spacing: .35px;
}
.modal-head .icon {
    width: 28px;
    height: 28px;
    margin: 7px 2px 0 0;
    stroke-width: 2;
}
.lead {
    margin-top: 13px;
    letter-spacing: -.2px;
    color: #5b6878;
}
h3 {
    font-size: 27px;
    font-weight: 600;
}
.h-check {
    margin-top: 26px;
}
.check-box {
    margin-top: 18px;
    height: 248px;
    border: 2px solid #e3e9ec;
    border-radius: 24px;
    padding: 22px 24px 0;
}
.check-row {
    display: flex;
    align-items: center;
    height: 70px;
    font-size: 25px;
}
.check-row:first-child {
    height: 72px;
    padding-top: 1px;
    border-bottom: 2px solid #e3e9ec;
}
.check-row span {
    flex: 1;
}
.check-row a {
    font-weight: 600;
    color: #a9500d;
}
.warn {
    width: 30px;
    height: 30px;
    margin: 0 22px 0 1px;
    color: #8a5a00;
}
.go {
    width: 26px;
    height: 26px;
    margin: 0 2px 0 10px;
    color: #a9500d;
    stroke-width: 2.2;
}
.confirm {
    display: flex;
    gap: 24px;
    margin-top: 16px;
    line-height: 36px;
    letter-spacing: -.3px;
}
.box {
    width: 40px;
    height: 40px;
    margin-top: 1px;
    border: 2px solid #8593a5;
    border-radius: 12px;
}
.h-changes {
    margin-top: 50px;
}
.changes {
    margin-top: 18px;
    letter-spacing: -.13px;
    color: #5b6878;
}
.email-row {
    display: flex;
    justify-content: space-between;
    margin-top: 49px;
}
.email-row h3 {
    letter-spacing: .1px;
}
.email-row p {
    margin-top: 5px;
    font-size: 25px;
    color: #5b6878;
}
.toggle {
    width: 80px;
    height: 48px;
    margin-top: 4px;
    border-radius: 24px;
    background-color: #e67e22;
    padding: 6px;
}
.toggle i {
    display: block;
    width: 36px;
    height: 36px;
    margin-left: auto;
    border-radius: 50%;
    background-color: #fff;
    box-shadow: 0 2px 4px rgba(20, 32, 46, .2);
}
.mail-box {
    margin-top: 22px;
    height: 380px;
    border-radius: 24px;
    background-color: #f6f7f9;
    padding: 19px 24px 0;
    font-size: 25px;
}
.mail-row {
    display: flex;
    align-items: center;
    height: 48px;
    letter-spacing: .15px;
}
.mail-row .icon {
    margin-right: 17px;
}
.mail-row em {
    margin-left: 18px;
    font-style: normal;
    color: #8a5a00;
}
.mail-label {
    display: flex;
    gap: 12px;
    margin-top: 16px;
}
.mail-label b {
    font-weight: 600;
    letter-spacing: -.05px;
}
.mail-label span, .mail-hint {
    color: #5b6878;
}
.mail-label span {
    letter-spacing: .3px;
}
.message {
    display: flex;
    align-items: flex-end;
    justify-content: flex-end;
    height: 128px;
    margin-top: 9px;
    padding: 0 3px 3px 0;
    border: 2px solid #8593a5;
    border-radius: 16px;
    background-color: #fff;
}
.grip {
    width: 16px;
    height: 16px;
    stroke: #4a4a4a;
    stroke-width: 1.3;
}
.mail-hint {
    margin-top: 11px;
    letter-spacing: -.08px;
}
.modal-foot {
    border-top: 2px solid #e3ebed;
    padding: 32px 48px;
    display: flex;
    justify-content: flex-end;
    gap: 16px;
    font-weight: 600;
    text-align: center;
    line-height: 80px;
}
.cancel {
    width: 160px;
    height: 80px;
    border: 2px solid #8593a5;
    border-radius: 16px;
    line-height: 77px;
}
.confirm-btn {
    width: 284px;
    height: 80px;
    border-radius: 16px;
    background-color: #edf1f4;
    letter-spacing: -.2px;
    color: #5b6878;
}
```
